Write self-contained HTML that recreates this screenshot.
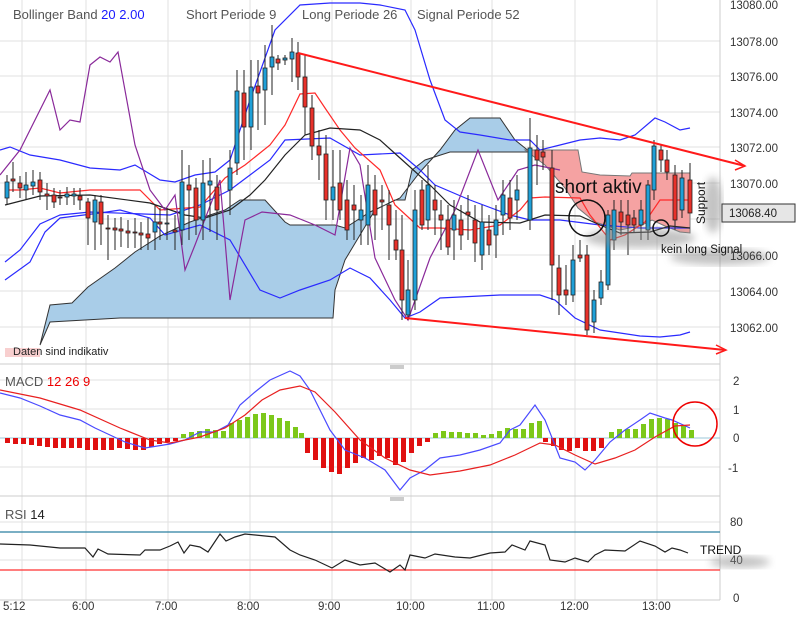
<!DOCTYPE html><html><head><meta charset="utf-8"><style>
body{margin:0;background:#fff;width:800px;height:612px;overflow:hidden;font-family:"Liberation Sans",sans-serif}
svg text{font-family:"Liberation Sans",sans-serif}
</style></head><body>
<svg width="800" height="612" viewBox="0 0 800 612" xmlns="http://www.w3.org/2000/svg">
<defs><filter id="bl"><feGaussianBlur stdDeviation="4"/></filter></defs>
<rect width="800" height="612" fill="#fff"/>
<g stroke="#e2e2e2" stroke-width="1">
<line x1="0" y1="41" x2="720" y2="41"/><line x1="0" y1="76" x2="720" y2="76"/><line x1="0" y1="112" x2="720" y2="112"/><line x1="0" y1="147" x2="720" y2="147"/><line x1="0" y1="183" x2="720" y2="183"/><line x1="0" y1="219" x2="720" y2="219"/><line x1="0" y1="255" x2="720" y2="255"/><line x1="0" y1="291" x2="720" y2="291"/><line x1="0" y1="327" x2="720" y2="327"/>
<line x1="0" y1="409" x2="720" y2="409"/><line x1="0" y1="467" x2="720" y2="467"/><line x1="0" y1="380" x2="720" y2="380"/>
<line x1="0" y1="522" x2="720" y2="522"/><line x1="0" y1="560" x2="720" y2="560"/>
<line x1="22" y1="0" x2="22" y2="600"/><line x1="86" y1="0" x2="86" y2="600"/><line x1="168" y1="0" x2="168" y2="600"/><line x1="250" y1="0" x2="250" y2="600"/><line x1="332" y1="0" x2="332" y2="600"/><line x1="411" y1="0" x2="411" y2="600"/><line x1="492" y1="0" x2="492" y2="600"/><line x1="575" y1="0" x2="575" y2="600"/><line x1="657" y1="0" x2="657" y2="600"/>
</g>
<g stroke="#ccc"><line x1="720" y1="0" x2="720" y2="600"/><line x1="0" y1="364" x2="720" y2="364"/><line x1="0" y1="496" x2="720" y2="496"/><line x1="0" y1="600" x2="720" y2="600"/></g>
<g stroke="#999"><line x1="390" y1="366" x2="404" y2="366"/><line x1="390" y1="368" x2="404" y2="368"/><line x1="390" y1="498" x2="404" y2="498"/><line x1="390" y1="500" x2="404" y2="500"/></g>
<polygon points="40,345 50,305 72,303 88,287 115,268 135,252 160,236 190,222 210,215 225,210 240,200 265,200 285,222 290,225 335,225 345,228 370,212 400,198 420,172 440,150 455,130 470,118 500,118 515,140 530,152 470,152 450,152 425,160 412,170 405,200 395,200 375,210 360,235 345,260 335,290 333,318 120,318 50,322" fill="#a9cde8" stroke="#333" stroke-width="1"/>
<polygon points="525,150 578,150 582,172 600,175 630,176 632,173 690,173 690,233 680,232 665,226 652,220 640,226 620,230 595,222 578,208 565,188 545,165" fill="#f5a2a2" stroke="#777" stroke-width="1"/>
<g fill="none" stroke-width="1.2">
<polyline stroke="#2a2aff" points="0,150 10,147 30,155 60,160 90,168 120,170 135,165 160,180 175,182 195,175 215,172 230,160 250,100 275,30 300,5 330,3 360,3 380,5 405,10 415,30 430,80 445,120 460,132 480,135 510,140 530,140 540,150 560,145 580,140 600,138 620,140 635,135 655,118 665,122 680,130 690,128"/>
<polyline stroke="#2a2aff" points="5,280 30,262 45,232 60,218 100,213 120,210 150,218 165,235 200,225 230,240 260,290 280,298 300,290 330,280 350,268 370,278 390,300 405,318 420,312 440,298 460,297 500,295 540,295 555,300 575,318 600,330 640,336 660,337 680,335 690,332"/>
<polyline stroke="#2a2aff" points="5,262 20,250 40,224 60,215 90,212 170,215 200,205 230,190 250,175 270,160 285,140 330,138 360,155 400,153 420,170 435,185 470,200 510,215 530,220 560,220 600,225 640,228 690,228"/>
<polyline stroke="#ff2a2a" points="5,190 20,190 40,188 60,193 90,190 140,190 160,210 200,207 225,178 245,165 270,145 285,125 300,94 315,93 325,108 340,130 355,148 380,170 395,205 420,228 440,228 470,230 500,225 520,210 530,198 545,197 580,198 590,215 610,240 625,235 645,222 660,200 670,200 690,200"/>
<polyline stroke="#222" points="5,205 40,196 90,195 150,203 185,215 205,218 230,210 250,195 265,180 285,155 305,135 330,128 360,130 380,140 400,158 430,185 450,205 480,222 520,223 545,215 580,216 600,225 620,233 650,232 670,226 690,228"/>
<polyline stroke="#8a2a9a" points="0,175 20,150 50,90 60,130 70,120 80,122 90,65 100,57 110,62 118,52 135,145 150,190 165,210 175,195 185,270 195,245 220,180 230,300 245,220 262,212 290,215 315,225 335,235 350,148 360,165 375,258 395,300 408,320 430,258 455,210 478,150 498,200 518,170 535,165 560,170"/>
</g>
<g stroke="#222" stroke-width="1">
<path d="M7 175V205M13 162V192M20 176V198M26 172V200M33 170V195M40 172V200M47 183V210M54 188V208M60 190V205M67 187V205M74 188V205M80 188V210M88 198V245M95 195V250M101 195V245M108 215V260M115 218V250M121 217V247M128 220V248M135 218V248M141 222V250M148 218V250M155 205V250M160 208V240M167 208V240M175 215V250M182 150V245M189 165V240M196 178V235M203 160V240M210 158V232M217 175V240M230 150V215M237 70V175M244 70V160M251 60V150M258 60V130M265 45V125M272 25V95M278 55V70M285 55V65M292 38V82M298 42V90M305 55V135M312 95V160M319 130V180M326 135V220M333 150V220M340 150V220M347 180V240M354 185V240M361 195V245M368 165V245M375 175V240M382 185V230M389 190V260M396 210V260M402 215V320M408 260V320M415 190V310M422 180V230M428 165V230M435 185V235M441 200V250M448 205V255M454 200V260M461 205V250M468 195V240M475 205V262M482 205V270M489 215V255M496 205V258M503 180V235M510 180V230M517 175V220M530 118V230M537 135V185M543 140V170M552 150V300M559 255V315M566 265V305M573 245V302M580 240V262M587 245V335M594 290V333M601 270V305M608 210V290M614 200V250M621 200V235M628 200V255M634 210V233M641 200V240M648 180V240M654 140V200M661 145V172M667 150V180M675 165V230M682 170V218M690 163V213"/>
</g>
<g stroke="#222" stroke-width="0.8">
<g fill="#1fa0d8">
<rect x="5" y="182" width="4" height="16"/><rect x="24" y="185" width="4" height="5"/><rect x="31" y="182" width="4" height="4"/><rect x="65" y="194" width="4" height="3"/><rect x="72" y="194" width="4" height="2"/><rect x="93" y="200" width="4" height="22"/><rect x="153" y="222" width="4" height="10"/><rect x="165" y="223" width="4" height="1"/><rect x="180" y="182" width="4" height="48"/><rect x="201" y="183" width="4" height="37"/><rect x="208" y="181" width="4" height="4"/><rect x="228" y="168" width="4" height="22"/><rect x="235" y="91" width="4" height="72"/><rect x="249" y="87" width="4" height="40"/><rect x="263" y="68" width="4" height="22"/><rect x="270" y="57" width="4" height="10"/><rect x="283" y="58" width="4" height="2"/><rect x="290" y="52" width="4" height="7"/><rect x="331" y="187" width="4" height="13"/><rect x="359" y="210" width="4" height="10"/><rect x="366" y="185" width="4" height="40"/><rect x="406" y="290" width="4" height="25"/><rect x="413" y="210" width="4" height="90"/><rect x="426" y="185" width="4" height="35"/><rect x="452" y="215" width="4" height="15"/><rect x="480" y="222" width="4" height="33"/><rect x="494" y="220" width="4" height="15"/><rect x="501" y="195" width="4" height="20"/><rect x="515" y="190" width="4" height="10"/><rect x="528" y="148" width="4" height="72"/><rect x="571" y="260" width="4" height="35"/><rect x="592" y="300" width="4" height="22"/><rect x="599" y="282" width="4" height="16"/><rect x="606" y="215" width="4" height="70"/><rect x="612" y="210" width="4" height="30"/><rect x="639" y="210" width="4" height="15"/><rect x="646" y="185" width="4" height="45"/><rect x="652" y="146" width="4" height="44"/><rect x="680" y="178" width="4" height="32"/>
</g>
<g fill="#e8312a">
<rect x="11" y="179" width="4" height="2"/><rect x="18" y="183" width="4" height="5"/><rect x="38" y="180" width="4" height="12"/><rect x="45" y="194" width="4" height="2"/><rect x="52" y="195" width="4" height="7"/><rect x="58" y="197" width="4" height="1"/><rect x="78" y="196" width="4" height="4"/><rect x="86" y="202" width="4" height="16"/><rect x="99" y="202" width="4" height="22"/><rect x="106" y="228" width="4" height="1"/><rect x="113" y="228" width="4" height="2"/><rect x="119" y="229" width="4" height="2"/><rect x="126" y="231" width="4" height="2"/><rect x="133" y="232" width="4" height="1"/><rect x="139" y="233" width="4" height="2"/><rect x="146" y="234" width="4" height="4"/><rect x="158" y="222" width="4" height="2"/><rect x="173" y="230" width="4" height="2"/><rect x="187" y="185" width="4" height="5"/><rect x="194" y="188" width="4" height="32"/><rect x="215" y="187" width="4" height="23"/><rect x="242" y="93" width="4" height="34"/><rect x="256" y="86" width="4" height="7"/><rect x="276" y="59" width="4" height="4"/><rect x="296" y="53" width="4" height="24"/><rect x="303" y="77" width="4" height="30"/><rect x="310" y="108" width="4" height="38"/><rect x="317" y="146" width="4" height="9"/><rect x="324" y="154" width="4" height="46"/><rect x="338" y="183" width="4" height="27"/><rect x="345" y="200" width="4" height="30"/><rect x="352" y="205" width="4" height="5"/><rect x="373" y="190" width="4" height="25"/><rect x="380" y="200" width="4" height="2"/><rect x="387" y="205" width="4" height="20"/><rect x="394" y="240" width="4" height="10"/><rect x="400" y="250" width="4" height="50"/><rect x="420" y="190" width="4" height="35"/><rect x="433" y="200" width="4" height="10"/><rect x="439" y="215" width="4" height="5"/><rect x="446" y="220" width="4" height="27"/><rect x="459" y="220" width="4" height="15"/><rect x="466" y="212" width="4" height="3"/><rect x="473" y="220" width="4" height="23"/><rect x="487" y="230" width="4" height="15"/><rect x="508" y="198" width="4" height="20"/><rect x="535" y="150" width="4" height="10"/><rect x="541" y="152" width="4" height="5"/><rect x="550" y="168" width="4" height="97"/><rect x="557" y="268" width="4" height="27"/><rect x="564" y="290" width="4" height="5"/><rect x="578" y="255" width="4" height="3"/><rect x="585" y="255" width="4" height="75"/><rect x="619" y="212" width="4" height="10"/><rect x="626" y="215" width="4" height="10"/><rect x="632" y="218" width="4" height="7"/><rect x="659" y="150" width="4" height="10"/><rect x="665" y="160" width="4" height="12"/><rect x="673" y="175" width="4" height="45"/><rect x="688" y="180" width="4" height="33"/>
</g></g>
<g stroke="#ff1a1a" stroke-width="2" fill="none">
<line x1="298" y1="53" x2="745" y2="166"/><polyline points="735,160 745,166 735,170" stroke-width="1.5"/>
<line x1="405" y1="318" x2="725" y2="350"/><polyline points="716,345 726,350 716,354" stroke-width="1.5"/>
</g>
<ellipse cx="640" cy="238" rx="55" ry="10" fill="#888" opacity=".5" filter="url(#bl)"/>
<ellipse cx="720" cy="257" rx="50" ry="8" fill="#888" opacity=".5" filter="url(#bl)"/>
<ellipse cx="713" cy="205" rx="9" ry="28" fill="#888" opacity=".5" filter="url(#bl)"/>
<text x="555" y="193" font-size="19" fill="#111">short aktiv</text>
<circle cx="587" cy="218" r="18" fill="none" stroke="#111" stroke-width="1.5"/>
<circle cx="661" cy="228" r="8" fill="none" stroke="#111" stroke-width="1.5"/>
<text x="661" y="253" font-size="11.5" fill="#111">kein long Signal</text>
<text transform="translate(705,224) rotate(-90)" font-size="12" fill="#111">Support</text>
<text x="13" y="19" font-size="13" fill="#555">Bollinger Band <tspan fill="#1a1aff">20 2.00</tspan></text>
<text x="186" y="19" font-size="13" fill="#555">Short Periode  9</text>
<text x="302" y="19" font-size="13" fill="#555">Long Periode  26</text>
<text x="417" y="19" font-size="13" fill="#555">Signal Periode  52</text>
<rect x="5" y="348" width="35" height="9" fill="#f8cfcf"/>
<text x="13" y="355" font-size="11" fill="#222">Daten sind indikativ</text>
<g font-size="11.5" fill="#333">
<text x="730" y="9">13080.00</text><text x="730" y="46">13078.00</text><text x="730" y="81">13076.00</text><text x="730" y="117">13074.00</text><text x="730" y="152">13072.00</text><text x="730" y="188">13070.00</text><text x="730" y="260">13066.00</text><text x="730" y="296">13064.00</text><text x="730" y="332">13062.00</text>
<text x="733" y="385">2</text><text x="733" y="414">1</text><text x="733" y="442">0</text><text x="728" y="472">-1</text>
<text x="730" y="526">80</text><text x="730" y="564">40</text><text x="733" y="602">0</text>
</g>
<rect x="722" y="204" width="73" height="18" fill="#e6e6e6" stroke="#333"/>
<text x="729" y="217" font-size="11.5" fill="#222">13068.40</text>
<text x="5" y="386" font-size="13" fill="#555">MACD <tspan fill="#e00">12 26 9</tspan></text>
<line x1="0" y1="438" x2="720" y2="438" stroke="#9cc7d8"/>
<g fill="#e01010">
<rect x="5" y="438" width="5" height="5"/><rect x="13" y="438" width="5" height="6"/><rect x="21" y="438" width="5" height="6"/><rect x="29" y="438" width="5" height="7"/><rect x="37" y="438" width="5" height="8"/><rect x="45" y="438" width="5" height="9"/><rect x="53" y="438" width="5" height="10"/><rect x="61" y="438" width="5" height="10"/><rect x="69" y="438" width="5" height="10"/><rect x="77" y="438" width="5" height="10"/><rect x="85" y="438" width="5" height="12"/><rect x="93" y="438" width="5" height="12"/><rect x="101" y="438" width="5" height="12"/><rect x="109" y="438" width="5" height="12"/><rect x="117" y="438" width="5" height="10"/><rect x="125" y="438" width="5" height="11"/><rect x="133" y="438" width="5" height="12"/><rect x="141" y="438" width="5" height="12"/><rect x="149" y="438" width="5" height="9"/><rect x="157" y="438" width="5" height="6"/><rect x="165" y="438" width="5" height="4"/><rect x="173" y="438" width="5" height="3"/>
<rect x="305" y="438" width="5" height="15"/><rect x="313" y="438" width="5" height="22"/><rect x="321" y="438" width="5" height="30"/><rect x="329" y="438" width="5" height="34"/><rect x="337" y="438" width="5" height="36"/><rect x="345" y="438" width="5" height="30"/><rect x="353" y="438" width="5" height="25"/><rect x="361" y="438" width="5" height="20"/><rect x="369" y="438" width="5" height="22"/><rect x="377" y="438" width="5" height="18"/><rect x="385" y="438" width="5" height="20"/><rect x="393" y="438" width="5" height="27"/><rect x="401" y="438" width="5" height="24"/><rect x="409" y="438" width="5" height="15"/><rect x="417" y="438" width="5" height="8"/><rect x="425" y="438" width="5" height="4"/>
<rect x="543" y="438" width="5" height="4"/><rect x="551" y="438" width="5" height="8"/><rect x="559" y="438" width="5" height="12"/><rect x="567" y="438" width="5" height="13"/><rect x="575" y="438" width="5" height="10"/><rect x="583" y="438" width="5" height="13"/><rect x="591" y="438" width="5" height="13"/><rect x="599" y="438" width="5" height="10"/>
</g>
<g fill="#7cc81a">
<rect x="181" y="434" width="5" height="4"/><rect x="189" y="432" width="5" height="6"/><rect x="197" y="431" width="5" height="7"/><rect x="205" y="429" width="5" height="9"/><rect x="213" y="430" width="5" height="8"/><rect x="221" y="431" width="5" height="7"/><rect x="229" y="423" width="5" height="15"/><rect x="237" y="420" width="5" height="18"/><rect x="245" y="417" width="5" height="21"/><rect x="253" y="414" width="5" height="24"/><rect x="261" y="413" width="5" height="25"/><rect x="269" y="415" width="5" height="23"/><rect x="277" y="418" width="5" height="20"/><rect x="285" y="421" width="5" height="17"/><rect x="293" y="427" width="5" height="11"/><rect x="299" y="433" width="5" height="5"/>
<rect x="433" y="433" width="5" height="5"/><rect x="441" y="431" width="5" height="7"/><rect x="449" y="432" width="5" height="6"/><rect x="457" y="432" width="5" height="6"/><rect x="465" y="433" width="5" height="5"/><rect x="473" y="433" width="5" height="5"/><rect x="481" y="435" width="5" height="3"/><rect x="489" y="434" width="5" height="4"/><rect x="497" y="431" width="5" height="7"/><rect x="505" y="428" width="5" height="10"/><rect x="513" y="429" width="5" height="9"/><rect x="521" y="429" width="5" height="9"/><rect x="529" y="423" width="5" height="15"/><rect x="537" y="421" width="5" height="17"/>
<rect x="609" y="432" width="5" height="6"/><rect x="617" y="429" width="5" height="9"/><rect x="625" y="429" width="5" height="9"/><rect x="633" y="429" width="5" height="9"/><rect x="641" y="424" width="5" height="14"/><rect x="649" y="419" width="5" height="19"/><rect x="657" y="418" width="5" height="20"/><rect x="665" y="419" width="5" height="19"/><rect x="673" y="423" width="5" height="15"/><rect x="681" y="426" width="5" height="12"/><rect x="689" y="430" width="5" height="8"/>
</g>
<g fill="none" stroke-width="1.2">
<polyline stroke="#4a4aff" points="0,393 20,398 40,406 60,415 80,420 95,428 110,435 125,442 145,448 170,444 185,440 200,432 215,432 228,425 240,405 255,392 270,380 290,371 300,376 310,390 320,410 330,430 345,450 365,458 385,470 400,490 410,478 425,470 440,458 460,455 480,450 500,443 510,430 520,425 535,405 545,420 560,458 575,462 585,470 595,460 610,442 625,430 640,420 650,413 665,418 672,420 690,428"/>
<polyline stroke="#e82020" points="0,390 40,398 80,410 120,428 150,440 170,443 200,437 225,428 245,415 262,400 280,390 300,386 315,392 335,412 360,440 385,458 410,470 430,475 460,471 490,465 515,455 540,443 555,445 575,455 595,464 615,458 635,450 655,437 675,426 690,425"/>
</g>
<circle cx="695" cy="424" r="22" fill="none" stroke="#e00" stroke-width="1.5"/>
<text x="5" y="519" font-size="13" fill="#555">RSI <tspan fill="#222">14</tspan></text>
<line x1="0" y1="532" x2="720" y2="532" stroke="#2a7fa0" stroke-width="1.2"/>
<line x1="0" y1="570" x2="720" y2="570" stroke="#ff3030" stroke-width="1.2"/>
<polyline fill="none" stroke="#222" stroke-width="1.2" points="0,544 30,545 60,548 85,548 93,557 98,549 108,554 140,555 145,550 160,550 170,546 178,542 184,553 190,545 200,547 208,552 220,534 226,541 235,537 245,534 275,537 290,550 300,555 315,560 332,568 345,560 360,565 375,563 390,572 400,565 405,570 410,555 425,558 435,554 455,557 470,558 490,553 505,552 512,545 525,550 530,541 545,545 550,560 565,562 575,558 588,562 595,555 605,550 625,551 640,541 655,546 665,552 672,548 680,550 688,553"/>
<ellipse cx="740" cy="562" rx="30" ry="6" fill="#888" opacity=".5" filter="url(#bl)"/>
<text x="700" y="554" font-size="12" fill="#111">TREND</text>
<g font-size="11.5" fill="#333"><text x="3" y="610">5:12</text><text x="72" y="610">6:00</text><text x="155" y="610">7:00</text><text x="237" y="610">8:00</text><text x="318" y="610">9:00</text><text x="396" y="610">10:00</text><text x="477" y="610">11:00</text><text x="560" y="610">12:00</text><text x="642" y="610">13:00</text></g>
</svg>
</body></html>
